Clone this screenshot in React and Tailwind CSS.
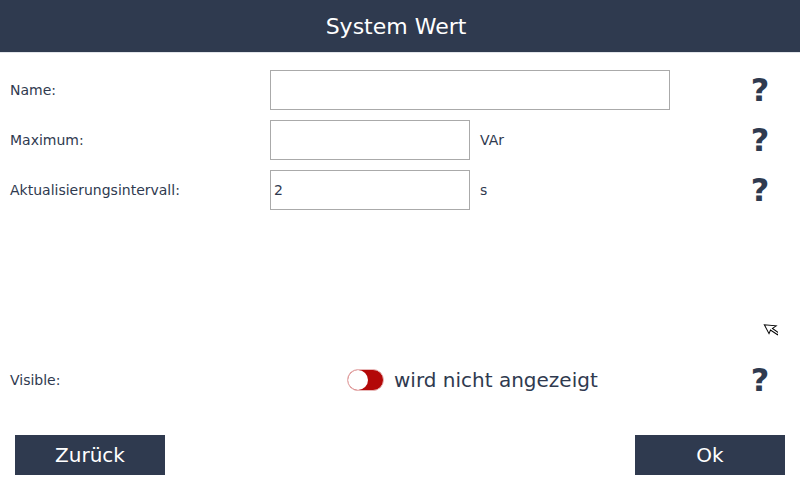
const font = { fontFamily: '"DejaVu Sans", sans-serif' };

function Help() {
  return (
    <div className="w-[40px] ml-auto mr-[20px] text-center text-[32px] font-bold leading-[40px] text-[#2f3a4f]">?</div>
  );
}

function Row({ label, inputClass, value, unit }) {
  return (
    <div className="flex items-center h-[40px]">
      <div className="w-[270px] pl-[10px] text-[14px] text-[#2f3a4f]">{label}</div>
      <div className={`${inputClass} h-[40px] border border-[#aaaaaa] bg-white pl-[3px] flex items-center text-[14px] text-[#2f3a4f]`}>{value}</div>
      {unit ? <div className="pl-[10px] text-[14px] text-[#2f3a4f]">{unit}</div> : null}
      <Help />
    </div>
  );
}

export default function App() {
  return (
    <div className="relative w-[800px] h-[480px] bg-white flex flex-col overflow-hidden" style={font}>
      <div className="h-[53px] bg-[#2f3a4f] border-b border-[#e2e5ea] flex items-center justify-center text-[22px] text-white box-content-none">
        <span className="pl-[-8px] mr-[8px]">System Wert</span>
      </div>
      <div className="flex flex-col gap-[10px] pt-[17px]">
        <Row label="Name:" inputClass="w-[400px]" />
        <Row label="Maximum:" inputClass="w-[200px]" unit="VAr" />
        <Row label="Aktualisierungsintervall:" inputClass="w-[200px]" value="2" unit="s" />
      </div>
      <div className="flex items-center h-[40px] mt-[150px]">
        <div className="w-[347px] pl-[10px] text-[14px] text-[#2f3a4f]">Visible:</div>
        <div className="relative w-[37px] h-[22px] rounded-full bg-[#b30808] border border-[#e8b8b8]">
          <div className="w-[20px] h-[20px] rounded-full bg-white"></div>
        </div>
        <div className="pl-[10px] text-[20px] text-[#2f3a4f]">wird nicht angezeigt</div>
        <Help />
      </div>
      <div className="flex justify-between px-[15px] mt-[35px]">
        <button className="w-[150px] h-[40px] bg-[#2f3a4f] text-white text-[20px]">Zurück</button>
        <button className="w-[150px] h-[40px] bg-[#2f3a4f] text-white text-[20px]">Ok</button>
      </div>
      <svg className="absolute left-[762px] top-[323px]" width="16" height="17" viewBox="0 0 16 17">
        <path d="M0.5 0.5 L0.5 10.5 L3.5 8 L7.5 15.5 L9.5 14.5 L6 7.5 L10.5 7 Z" transform="rotate(-28 0.5 0.5) translate(1 2)" fill="#fff" stroke="#000" strokeWidth="1" />
      </svg>
    </div>
  );
}
